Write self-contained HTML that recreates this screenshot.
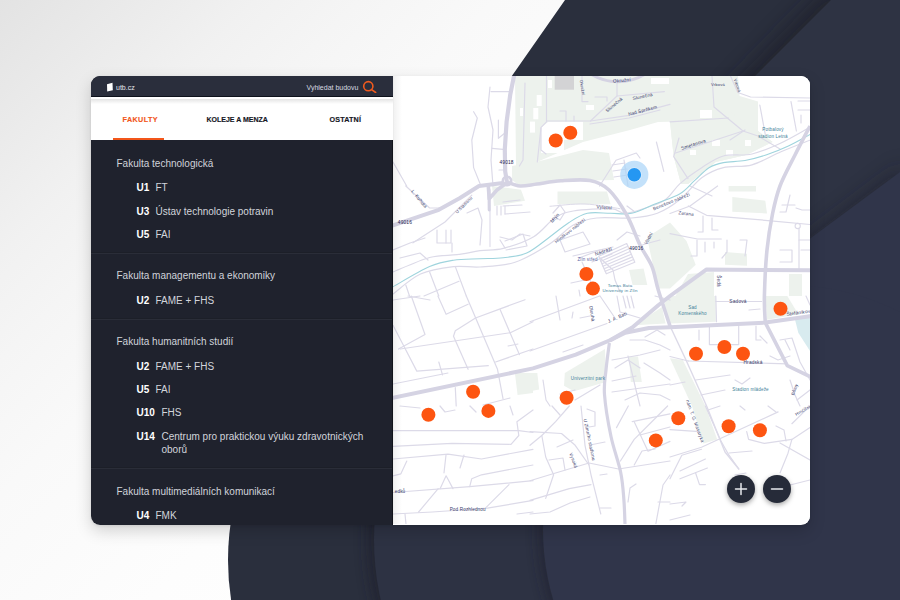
<!DOCTYPE html>
<html><head><meta charset="utf-8">
<style>
html,body{margin:0;padding:0}
body{width:900px;height:600px;overflow:hidden;position:relative;font-family:"Liberation Sans",sans-serif;background:linear-gradient(135deg,#e3e3e3 0%,#f1f1f1 17%,#f5f5f5 24%,#f9f9f9 33%,#fdfdfd 50%,#fff 70%)}
#bg{position:absolute;left:0;top:0}
#card{position:absolute;left:91px;top:76px;width:719px;height:449px;border-radius:9px;box-shadow:0 6px 16px rgba(0,0,0,.17),0 1px 3px rgba(0,0,0,.08);overflow:hidden;background:#fff}
#side{position:absolute;left:0;top:0;width:302px;height:449px;background:#1f222d;z-index:2;box-shadow:inset -1px 0 0 #11131a}
#hdr{position:absolute;left:0;top:0;width:302px;height:21px;background:#2a2e3c;box-shadow:inset 0 -1px 0 #0e121c}
#tabs{position:absolute;left:0;top:21px;width:302px;height:43px;background:#fff}
#tabs:before{content:"";position:absolute;left:0;right:0;top:1.5px;height:5px;background:linear-gradient(#e4e4e4,#fff)}
.t7{position:absolute;font-size:7px;line-height:9px;white-space:nowrap}
.tab{font-weight:700;color:#15171f;letter-spacing:0;-webkit-text-stroke:.15px currentColor}
.l{margin-top:1px;position:absolute;font-size:10px;line-height:12px;white-space:nowrap;color:#d2d5dc}
.h{color:#d0d3da}
.u{margin-top:1px;position:absolute;font-size:10px;line-height:12px;font-weight:700;color:#fff;white-space:nowrap}
.div{position:absolute;left:0;width:301px;height:1px;background:#2a2d38;box-shadow:0 -1px 0 #1c1f28}
#map{position:absolute;left:302px;top:0}
.zb{position:absolute;width:28px;height:28px;border-radius:50%;background:#262b39;box-shadow:0 2px 5px rgba(0,0,0,.35)}
</style></head><body>
<svg id="bg" width="900" height="600" viewBox="0 0 900 600">
<defs>
<filter id="blur6" x="-20%" y="-20%" width="140%" height="140%"><feGaussianBlur stdDeviation="6"/></filter>
<filter id="blur10" x="-50%" y="-50%" width="200%" height="200%"><feGaussianBlur stdDeviation="10"/></filter>
<clipPath id="clipb"><rect x="0" y="480" width="800" height="120"/></clipPath>
<filter id="blur4" x="-20%" y="-20%" width="140%" height="140%"><feGaussianBlur stdDeviation="4"/></filter>
</defs>
<polygon points="565,0 900,0 900,600 700,600 700,320 355,300" fill="#2a2f3d"/>
<polygon points="823,-10 900,-10 900,600 700,600 700,320 523,300" fill="#1a1d26" opacity=".55" filter="url(#blur10)"/>
<polygon points="831,0 900,0 900,600 700,600 700,320 531,300" fill="#2e3343"/>
<polygon points="905,165 905,600 700,600 700,320" fill="#1a1d26" opacity=".5" filter="url(#blur10)"/>
<polygon points="900,172 900,600 700,600 700,320" fill="#30354a"/>
<circle cx="488" cy="560" r="260" fill="#2a2f3d"/>
<circle cx="636" cy="540" r="270" fill="#1c1f29" opacity=".5" filter="url(#blur6)"/>
<circle cx="644" cy="540" r="270" fill="#2d3243"/>
<g clip-path="url(#clipb)"><circle cx="782" cy="530" r="245" fill="#1c1f29" opacity=".45" filter="url(#blur6)"/></g>
<circle cx="788" cy="530" r="245" fill="#30354a"/>
</svg>
<div id="card">
 <div id="side">
  <div id="hdr">
   <svg style="position:absolute;left:15px;top:6px" width="8" height="10" viewBox="0 0 8 10"><path d="M1 2.2 L6.5 0.8 L6.8 8.2 L1.2 9.6 Z" fill="#fff"/></svg>
   <div class="t7" style="left:25px;top:6.5px;color:#e6e8ec">utb.cz</div>
   <div class="t7" style="left:215.5px;top:6.5px;color:#d8dbe1">Vyhledat budovu</div>
   <svg style="position:absolute;left:271px;top:4px" width="16" height="13" viewBox="0 0 16 13"><circle cx="6.3" cy="6.2" r="4.6" stroke="#f05a1e" stroke-width="1.6" fill="none"/><line x1="9.6" y1="9.6" x2="13.6" y2="12.4" stroke="#f05a1e" stroke-width="1.7" stroke-linecap="round"/></svg>
  </div>
  <div id="tabs">
   <div class="t7 tab" style="left:31.5px;top:18px;color:#f2561a;font-size:7.2px;letter-spacing:.4px">FAKULTY</div>
   <div style="position:absolute;left:22px;top:41px;width:51px;height:2px;background:#f2561a"></div>
   <div class="t7 tab" style="left:115.5px;top:18px">KOLEJE A MENZA</div>
   <div class="t7 tab" style="left:238.5px;top:18px;font-size:7.2px;letter-spacing:.15px">OSTATNÍ</div>
  </div>
  <div class="l h" style="left:25.5px;top:81.3px">Fakulta technologická</div>
  <div class="u" style="left:45.5px;top:104.9px">U1</div><div class="l" style="left:64.5px;top:104.9px">FT</div>
  <div class="u" style="left:45.5px;top:128.5px">U3</div><div class="l" style="left:64.5px;top:128.5px">Ústav technologie potravin</div>
  <div class="u" style="left:45.5px;top:151.7px">U5</div><div class="l" style="left:64.5px;top:151.7px">FAI</div>
  <div class="div" style="top:177px"></div>
  <div class="l h" style="left:25.5px;top:193.1px">Fakulta managementu a ekonomiky</div>
  <div class="u" style="left:45.5px;top:217.5px">U2</div><div class="l" style="left:64.5px;top:217.5px">FAME + FHS</div>
  <div class="div" style="top:243px"></div>
  <div class="l h" style="left:25.5px;top:259.2px">Fakulta humanitních studií</div>
  <div class="u" style="left:45.5px;top:283.5px">U2</div><div class="l" style="left:64.5px;top:283.5px">FAME + FHS</div>
  <div class="u" style="left:45.5px;top:307.1px">U5</div><div class="l" style="left:64.5px;top:307.1px">FAI</div>
  <div class="u" style="left:45.5px;top:330.3px">U10</div><div class="l" style="left:70.5px;top:330.3px">FHS</div>
  <div class="u" style="left:45.5px;top:353.5px">U14</div><div class="l" style="left:70.5px;top:353.5px">Centrum pro praktickou výuku zdravotnických</div>
  <div class="l" style="left:70.5px;top:366.8px">oborů</div>
  <div class="div" style="top:392px"></div>
  <div class="l h" style="left:25.5px;top:408.8px">Fakulta multimediálních komunikací</div>
  <div class="u" style="left:45.5px;top:433px">U4</div><div class="l" style="left:64.5px;top:433px">FMK</div>
 </div>
 <svg id="map" width="417" height="448" viewBox="393 76 417 448">
  <rect x="393" y="76" width="417" height="448" fill="#fff"/>
<polygon points="515,76 738,76 739.6,96 758,101.6 758,131 772.6,142 760,148 747,154.8 715.8,162 700,175 688,184 681,184 673.7,156.6 670,121.8 658,122 630,130 583,142 537,162 523,166 516,166" fill="#edf2ed"/><polygon points="670,121.8 730,112 758,131 772.6,142 747,154.8 715.8,162 688,184 681,184 673.7,156.6" fill="#edf2ed"/><polygon points="512,166 540,161 583,150 609,153 614,180 590,180.5 561,181 537,184 520,186 512,180" fill="#edf2ed"/><polygon points="492,186 521,189.7 525,200.7 494,206" fill="#edf2ed"/><polygon points="557.5,191.5 607,191.5 610.6,204.3 557.5,204.3" fill="#edf2ed"/><polygon points="647,237.3 670,222.6 686.5,241 695.7,264.8 670,288.6 658,288.6" fill="#edf2ed"/><polygon points="629,270 643.6,268.5 647.3,285 632.6,285" fill="#edf2ed"/><polygon points="732.3,197 765.3,200.7 767,213.5 732.3,211.7" fill="#edf2ed"/><polygon points="728.6,186 756,186 756,191.5 728.6,191.5" fill="#edf2ed"/><polygon points="725,252 747,253.8 747,265.7 725,264.8" fill="#edf2ed"/><polygon points="789,274 802,274 802,296 789,296" fill="#edf2ed"/><polygon points="688,274 714,272 714,296 675.5,296" fill="#edf2ed"/><polygon points="670,296 715.8,296 715.8,321.7 670,323.5 662,307" fill="#edf2ed"/><polygon points="634.5,325.3 662,307 665.6,323.5" fill="#edf2ed"/><polygon points="765.3,296 787.3,296 798.3,314.3 767,319.8" fill="#edf2ed"/><polygon points="670,358.3 682.8,360 705.4,406 717.2,439.4 703.4,443.4 692,406" fill="#edf2ed"/><polygon points="564.8,373 605,349 606,382 574,391.3 564,385.8" fill="#edf2ed"/><polygon points="629,356.5 638,356.5 641.8,382 630.8,382" fill="#edf2ed"/><polygon points="530,373 537.3,373 539.2,389.5 530,391.3" fill="#edf2ed"/><polygon points="514.9,373 533,373 533,393 517.6,395" fill="#edf2ed"/><rect x="536.7" y="95" width="5" height="11" fill="#fff"/><rect x="533.3" y="108" width="5" height="11.3" fill="#fff"/><rect x="530" y="121.6" width="5" height="11" fill="#fff"/><rect x="548" y="80" width="4" height="8" fill="#fff"/><rect x="586" y="105" width="8" height="5" fill="#fff"/><rect x="651" y="78" width="18" height="6" fill="#fff"/><rect x="655" y="130" width="14" height="10" fill="#fff"/><rect x="700" y="110" width="12" height="8" fill="#fff"/><rect x="712" y="140" width="8" height="6" fill="#fff"/><rect x="726" y="150" width="7" height="6" fill="#fff"/><rect x="745" y="140" width="6" height="6" fill="#fff"/><rect x="690" y="150" width="6" height="5" fill="#fff"/><rect x="520" y="108" width="3" height="8" fill="#fff"/><polygon points="548.3,121.8 583,121.8 583,140 564,140 564,153 541,153 541,128" fill="#fff"/><rect x="554.7" y="76" width="19.3" height="13.7" fill="#d3d3d5"/><polygon points="794.6,318 810,314.3 810,351 798.3,332.7" fill="#d8ebef"/><polyline points="490,87 488,107 493,130 491,160 493,186" fill="none" stroke="#dcdae8" stroke-width="1.2" stroke-linejoin="round" stroke-linecap="round"/><polyline points="491,91.6 510,91.6" fill="none" stroke="#dcdae8" stroke-width="1.2" stroke-linejoin="round" stroke-linecap="round"/><polyline points="473.6,111.7 477.3,118 471.8,140 473.6,167.6 481,186" fill="none" stroke="#dcdae8" stroke-width="1.2" stroke-linejoin="round" stroke-linecap="round"/><polyline points="393,162 406.7,186" fill="none" stroke="#dcdae8" stroke-width="1.2" stroke-linejoin="round" stroke-linecap="round"/><polyline points="498.4,120 498.4,138.3 504,133.7" fill="none" stroke="#dcdae8" stroke-width="1.2" stroke-linejoin="round" stroke-linecap="round"/><polyline points="492,148.4 503,149.3" fill="none" stroke="#dcdae8" stroke-width="1.2" stroke-linejoin="round" stroke-linecap="round"/><polyline points="525,83 523,160 519.4,166" fill="none" stroke="#dcdae8" stroke-width="1.2" stroke-linejoin="round" stroke-linecap="round"/><polyline points="499,170 504,170" fill="none" stroke="#dcdae8" stroke-width="1.2" stroke-linejoin="round" stroke-linecap="round"/><polyline points="546.5,76 546.5,121.8 541,127.3 537.3,162" fill="none" stroke="#dcdae8" stroke-width="1.2" stroke-linejoin="round" stroke-linecap="round"/><polyline points="546.5,121 590.5,121 629,115.4 670,104.4" fill="none" stroke="#dcdae8" stroke-width="1.2" stroke-linejoin="round" stroke-linecap="round"/><polyline points="590,124 629,118 660,110" fill="none" stroke="#dcdae8" stroke-width="1.2" stroke-linejoin="round" stroke-linecap="round"/><polyline points="590.5,121 617,96 617,82" fill="none" stroke="#dcdae8" stroke-width="1.2" stroke-linejoin="round" stroke-linecap="round"/><polyline points="617,96 664.4,91.6" fill="none" stroke="#dcdae8" stroke-width="1.2" stroke-linejoin="round" stroke-linecap="round"/><polyline points="582,76 582,101.6 588,101.6" fill="none" stroke="#dcdae8" stroke-width="1.2" stroke-linejoin="round" stroke-linecap="round"/><polyline points="595,97 607,97 607,101" fill="none" stroke="#dcdae8" stroke-width="1.2" stroke-linejoin="round" stroke-linecap="round"/><polyline points="560,111 566,111 566,121" fill="none" stroke="#dcdae8" stroke-width="1.2" stroke-linejoin="round" stroke-linecap="round"/><polyline points="574,116 574,121" fill="none" stroke="#dcdae8" stroke-width="1.2" stroke-linejoin="round" stroke-linecap="round"/><polyline points="599.6,186 616,160.3 636.3,153 640,158" fill="none" stroke="#dcdae8" stroke-width="1.2" stroke-linejoin="round" stroke-linecap="round"/><polyline points="656.4,142 663.8,171.3" fill="none" stroke="#dcdae8" stroke-width="1.2" stroke-linejoin="round" stroke-linecap="round"/><polyline points="612,165 625,163" fill="none" stroke="#dcdae8" stroke-width="1.2" stroke-linejoin="round" stroke-linecap="round"/><polyline points="613,171 627,169" fill="none" stroke="#dcdae8" stroke-width="1.2" stroke-linejoin="round" stroke-linecap="round"/><polyline points="614,177 628,175" fill="none" stroke="#dcdae8" stroke-width="1.2" stroke-linejoin="round" stroke-linecap="round"/><polyline points="624,160 628,186" fill="none" stroke="#dcdae8" stroke-width="1.2" stroke-linejoin="round" stroke-linecap="round"/><polyline points="541,128 541,150 546,154" fill="none" stroke="#dcdae8" stroke-width="1.2" stroke-linejoin="round" stroke-linecap="round"/><polyline points="712,76 714,107 743,131 758,136 780,149" fill="none" stroke="#dcdae8" stroke-width="1.2" stroke-linejoin="round" stroke-linecap="round"/><polyline points="670,121.8 728.6,118" fill="none" stroke="#dcdae8" stroke-width="1.2" stroke-linejoin="round" stroke-linecap="round"/><polyline points="679,138 673.7,156.6 688,178.6" fill="none" stroke="#dcdae8" stroke-width="1.2" stroke-linejoin="round" stroke-linecap="round"/><polyline points="675.5,153 743,131" fill="none" stroke="#dcdae8" stroke-width="1.2" stroke-linejoin="round" stroke-linecap="round"/><polyline points="730.5,76 737.8,92.5 750.6,97 810,98" fill="none" stroke="#dcdae8" stroke-width="1.2" stroke-linejoin="round" stroke-linecap="round"/><polyline points="759.8,105 765.3,134.6" fill="none" stroke="#dcdae8" stroke-width="1.2" stroke-linejoin="round" stroke-linecap="round"/><polyline points="791,101.6 796.4,131" fill="none" stroke="#dcdae8" stroke-width="1.2" stroke-linejoin="round" stroke-linecap="round"/><polyline points="798,101 810,101" fill="none" stroke="#dcdae8" stroke-width="1.2" stroke-linejoin="round" stroke-linecap="round"/><polyline points="798,110 810,110" fill="none" stroke="#dcdae8" stroke-width="1.2" stroke-linejoin="round" stroke-linecap="round"/><polyline points="801,115 801,123" fill="none" stroke="#dcdae8" stroke-width="1.2" stroke-linejoin="round" stroke-linecap="round"/><polyline points="730,140 745,130" fill="none" stroke="#dcdae8" stroke-width="1.2" stroke-linejoin="round" stroke-linecap="round"/><path d="M393.0,272.0 C399.1,269.6 418.9,260.4 429.6,257.5 C440.3,254.6 448.6,255.8 457.0,254.7 C465.4,253.6 472.3,251.8 480.0,250.7 C487.7,249.6 494.4,250.6 503.3,248.3 C512.2,246.0 525.1,241.8 533.7,236.7 C542.3,231.6 548.1,222.3 554.7,218.0 C561.3,213.7 564.0,212.6 573.3,211.0 C582.6,209.4 602.1,208.3 610.7,208.7 C619.3,209.1 619.3,213.3 624.7,213.3 C630.1,213.3 636.6,210.9 643.3,208.7 C650.0,206.5 658.9,204.2 665.0,200.0 C671.1,195.8 673.9,189.0 680.0,183.6 C686.1,178.2 694.5,172.3 701.7,167.7 C708.9,163.1 715.0,158.3 723.4,156.0 C731.8,153.7 742.4,156.2 752.0,154.0 C761.6,151.8 771.3,147.5 781.0,143.0 C790.7,138.5 805.2,129.8 810.0,127.2" fill="none" stroke="#dcdae8" stroke-width="1.2" stroke-linecap="round"/><path d="M393.0,294.0 C397.6,290.7 410.4,278.6 420.5,274.0 C430.6,269.4 443.6,267.8 453.5,266.6 C463.4,265.4 469.8,267.7 480.0,267.0 C490.2,266.3 503.3,266.2 515.0,262.3 C526.7,258.4 540.3,249.9 550.0,243.7 C559.7,237.5 565.5,229.3 573.3,225.0 C581.1,220.7 587.0,219.2 596.7,218.0 C606.4,216.8 621.6,218.8 631.7,218.0 C641.8,217.2 649.2,216.4 657.3,213.3 C665.3,210.2 672.6,205.4 680.0,199.5 C687.4,193.6 694.5,183.1 701.7,177.8 C708.9,172.5 715.0,169.9 723.4,167.7 C731.8,165.5 742.4,167.5 752.0,164.8 C761.6,162.2 771.3,155.9 781.0,151.8 C790.7,147.7 805.2,142.1 810.0,140.2" fill="none" stroke="#dcdae8" stroke-width="1.2" stroke-linecap="round"/><path d="M550.0,206.3 C555.8,205.9 573.3,203.6 585.0,204.0 C596.7,204.4 614.2,207.9 620.0,208.7" fill="none" stroke="#dcdae8" stroke-width="1.0" stroke-linecap="round"/><polyline points="405.8,186 429.6,208 440.6,208" fill="none" stroke="#dcdae8" stroke-width="1.2" stroke-linejoin="round" stroke-linecap="round"/><polyline points="413,242.8 445,222 471.8,195.2" fill="none" stroke="#dcdae8" stroke-width="1.2" stroke-linejoin="round" stroke-linecap="round"/><polyline points="429.6,272 438.8,296" fill="none" stroke="#dcdae8" stroke-width="1.2" stroke-linejoin="round" stroke-linecap="round"/><polyline points="455.3,266.6 466.3,296" fill="none" stroke="#dcdae8" stroke-width="1.2" stroke-linejoin="round" stroke-linecap="round"/><polyline points="405.8,285 409.5,296" fill="none" stroke="#dcdae8" stroke-width="1.2" stroke-linejoin="round" stroke-linecap="round"/><polyline points="424,296 459,281.3" fill="none" stroke="#dcdae8" stroke-width="1.2" stroke-linejoin="round" stroke-linecap="round"/><polyline points="437,230 437,243 451,243 451,230" fill="none" stroke="#dcdae8" stroke-width="1.2" stroke-linejoin="round" stroke-linecap="round"/><polyline points="446,243 446,230" fill="none" stroke="#dcdae8" stroke-width="1.2" stroke-linejoin="round" stroke-linecap="round"/><polyline points="452,243 452,252" fill="none" stroke="#dcdae8" stroke-width="1.2" stroke-linejoin="round" stroke-linecap="round"/><polyline points="467,213 478,208 482,220 480,245" fill="none" stroke="#dcdae8" stroke-width="1.2" stroke-linejoin="round" stroke-linecap="round"/><polyline points="490,198.8 490,246.5" fill="none" stroke="#e4e2ee" stroke-width="1.4" stroke-linejoin="round" stroke-linecap="round"/><polyline points="500,237 512,240 520,234 530,236" fill="none" stroke="#dcdae8" stroke-width="1.2" stroke-linejoin="round" stroke-linecap="round"/><polyline points="500,240 505,248" fill="none" stroke="#dcdae8" stroke-width="1.2" stroke-linejoin="round" stroke-linecap="round"/><polyline points="503,202 520,200" fill="none" stroke="#dcdae8" stroke-width="1.2" stroke-linejoin="round" stroke-linecap="round"/><polyline points="503,206 522,205" fill="none" stroke="#dcdae8" stroke-width="1.2" stroke-linejoin="round" stroke-linecap="round"/><polyline points="497,206 497,215" fill="none" stroke="#dcdae8" stroke-width="1.2" stroke-linejoin="round" stroke-linecap="round"/><polyline points="501,206 501,215" fill="none" stroke="#dcdae8" stroke-width="1.2" stroke-linejoin="round" stroke-linecap="round"/><polyline points="505,206 505,214" fill="none" stroke="#dcdae8" stroke-width="1.2" stroke-linejoin="round" stroke-linecap="round"/><polyline points="505,214 530,212" fill="none" stroke="#dcdae8" stroke-width="1.2" stroke-linejoin="round" stroke-linecap="round"/><polyline points="505,241 523,234 527,246 506,250" fill="none" stroke="#dcdae8" stroke-width="1.2" stroke-linejoin="round" stroke-linecap="round"/><polyline points="393,250 410,243 425,238" fill="none" stroke="#dcdae8" stroke-width="1.2" stroke-linejoin="round" stroke-linecap="round"/><polyline points="400,258 420,253 428,260" fill="none" stroke="#dcdae8" stroke-width="1.2" stroke-linejoin="round" stroke-linecap="round"/><polyline points="553,213 560,205 565,212 560,220 555,217" fill="none" stroke="#dcdae8" stroke-width="1.2" stroke-linejoin="round" stroke-linecap="round"/><polyline points="560,240 583,232 590,244 565,252 560,240" fill="none" stroke="#dcdae8" stroke-width="1.2" stroke-linejoin="round" stroke-linecap="round"/><polyline points="579,258 600,250 612,250" fill="none" stroke="#dcdae8" stroke-width="1.2" stroke-linejoin="round" stroke-linecap="round"/><polyline points="592,262 612,254" fill="none" stroke="#dcdae8" stroke-width="1.2" stroke-linejoin="round" stroke-linecap="round"/><polyline points="600,258 613,270 615,280 620,292" fill="none" stroke="#dcdae8" stroke-width="1.2" stroke-linejoin="round" stroke-linecap="round"/><polyline points="617,240 627,232 640,236" fill="none" stroke="#dcdae8" stroke-width="1.2" stroke-linejoin="round" stroke-linecap="round"/><polyline points="630,250 645,244 660,240" fill="none" stroke="#dcdae8" stroke-width="1.2" stroke-linejoin="round" stroke-linecap="round"/><polyline points="573,256 590,252 613,247" fill="none" stroke="#dcdae8" stroke-width="1.2" stroke-linejoin="round" stroke-linecap="round"/><polyline points="582,262 590,280 596,292" fill="none" stroke="#dcdae8" stroke-width="1.2" stroke-linejoin="round" stroke-linecap="round"/><polyline points="571,283 585,280" fill="none" stroke="#dcdae8" stroke-width="1.2" stroke-linejoin="round" stroke-linecap="round"/><polyline points="579,290 580,296" fill="none" stroke="#dcdae8" stroke-width="1.2" stroke-linejoin="round" stroke-linecap="round"/><polyline points="598.7,256.3 626.7,243.5 634.8,262.2 606.3,273.8 598.7,256.3" fill="none" stroke="#dcdae8" stroke-width="1.2" stroke-linejoin="round" stroke-linecap="round"/><polyline points="599.8,258.8 627.9,246.2" fill="none" stroke="#dcdae8" stroke-width="1.2" stroke-linejoin="round" stroke-linecap="round"/><polyline points="600.9,261.3 629.0,248.8" fill="none" stroke="#dcdae8" stroke-width="1.2" stroke-linejoin="round" stroke-linecap="round"/><polyline points="602.0,263.8 630.2,251.5" fill="none" stroke="#dcdae8" stroke-width="1.2" stroke-linejoin="round" stroke-linecap="round"/><polyline points="603.0,266.3 631.3,254.2" fill="none" stroke="#dcdae8" stroke-width="1.2" stroke-linejoin="round" stroke-linecap="round"/><polyline points="604.1,268.8 632.5,256.9" fill="none" stroke="#dcdae8" stroke-width="1.2" stroke-linejoin="round" stroke-linecap="round"/><polyline points="605.2,271.3 633.6,259.5" fill="none" stroke="#dcdae8" stroke-width="1.2" stroke-linejoin="round" stroke-linecap="round"/><polyline points="627,206 635,212" fill="none" stroke="#dcdae8" stroke-width="1.2" stroke-linejoin="round" stroke-linecap="round"/><polyline points="670,213.5 690,206 717.6,186" fill="none" stroke="#dcdae8" stroke-width="1.2" stroke-linejoin="round" stroke-linecap="round"/><polyline points="688.3,206 706.6,215.3 770.8,220.8 810,224.5" fill="none" stroke="#dcdae8" stroke-width="1.2" stroke-linejoin="round" stroke-linecap="round"/><polyline points="670,233.6 697.5,239 721.3,239" fill="none" stroke="#dcdae8" stroke-width="1.2" stroke-linejoin="round" stroke-linecap="round"/><polyline points="703,216 703,232 698,232" fill="none" stroke="#dcdae8" stroke-width="1.2" stroke-linejoin="round" stroke-linecap="round"/><polyline points="712,218 712,230 718,230" fill="none" stroke="#dcdae8" stroke-width="1.2" stroke-linejoin="round" stroke-linecap="round"/><polyline points="740,240 747,240 745,256" fill="none" stroke="#dcdae8" stroke-width="1.2" stroke-linejoin="round" stroke-linecap="round"/><polyline points="727,240 727,252 722,258" fill="none" stroke="#dcdae8" stroke-width="1.2" stroke-linejoin="round" stroke-linecap="round"/><polyline points="697,240 697,256 691,256" fill="none" stroke="#dcdae8" stroke-width="1.2" stroke-linejoin="round" stroke-linecap="round"/><polyline points="705,242 705,252" fill="none" stroke="#dcdae8" stroke-width="1.2" stroke-linejoin="round" stroke-linecap="round"/><polyline points="714,242 714,248" fill="none" stroke="#dcdae8" stroke-width="1.2" stroke-linejoin="round" stroke-linecap="round"/><polyline points="790,195 786,212 780,212" fill="none" stroke="#dcdae8" stroke-width="1.2" stroke-linejoin="round" stroke-linecap="round"/><polyline points="782,205 795,205" fill="none" stroke="#dcdae8" stroke-width="1.2" stroke-linejoin="round" stroke-linecap="round"/><polyline points="796,208 802,210 810,210" fill="none" stroke="#dcdae8" stroke-width="1.2" stroke-linejoin="round" stroke-linecap="round"/><polyline points="799,225 799,270" fill="none" stroke="#dcdae8" stroke-width="1.2" stroke-linejoin="round" stroke-linecap="round"/><polyline points="780,250 792,250 792,262 780,262" fill="none" stroke="#dcdae8" stroke-width="1.2" stroke-linejoin="round" stroke-linecap="round"/><polyline points="799,240 810,240" fill="none" stroke="#dcdae8" stroke-width="1.2" stroke-linejoin="round" stroke-linecap="round"/><polyline points="801,250 810,250" fill="none" stroke="#dcdae8" stroke-width="1.2" stroke-linejoin="round" stroke-linecap="round"/><polyline points="690,186 712,196" fill="none" stroke="#dcdae8" stroke-width="1.2" stroke-linejoin="round" stroke-linecap="round"/><polyline points="411.3,296 425,334.5 398.5,349" fill="none" stroke="#dcdae8" stroke-width="1.2" stroke-linejoin="round" stroke-linecap="round"/><polyline points="393,325.3 416.8,371.1 488.3,365.6" fill="none" stroke="#dcdae8" stroke-width="1.2" stroke-linejoin="round" stroke-linecap="round"/><polyline points="437.9,296 446.1,314.3 468.1,304.2" fill="none" stroke="#dcdae8" stroke-width="1.2" stroke-linejoin="round" stroke-linecap="round"/><polyline points="466.3,296 497.5,369.3 503,398.6" fill="none" stroke="#dcdae8" stroke-width="1.2" stroke-linejoin="round" stroke-linecap="round"/><polyline points="475.5,318 525,299.7" fill="none" stroke="#dcdae8" stroke-width="1.2" stroke-linejoin="round" stroke-linecap="round"/><polyline points="475.5,318 455.3,330.8 453.5,336.3 468.1,369.3" fill="none" stroke="#dcdae8" stroke-width="1.2" stroke-linejoin="round" stroke-linecap="round"/><polyline points="400.3,349 510.3,332.7 533,321.7" fill="none" stroke="#dcdae8" stroke-width="1.2" stroke-linejoin="round" stroke-linecap="round"/><polyline points="500.2,309.7 519.4,354.6" fill="none" stroke="#dcdae8" stroke-width="1.2" stroke-linejoin="round" stroke-linecap="round"/><polyline points="438.8,362 442.5,374.8" fill="none" stroke="#dcdae8" stroke-width="1.2" stroke-linejoin="round" stroke-linecap="round"/><polyline points="495.6,362 533,349" fill="none" stroke="#dcdae8" stroke-width="1.2" stroke-linejoin="round" stroke-linecap="round"/><polyline points="455.3,387.6 456.2,406" fill="none" stroke="#dcdae8" stroke-width="1.2" stroke-linejoin="round" stroke-linecap="round"/><polyline points="483,405 510,398" fill="none" stroke="#dcdae8" stroke-width="1.2" stroke-linejoin="round" stroke-linecap="round"/><polyline points="393,384 448,373" fill="none" stroke="#dcdae8" stroke-width="1.2" stroke-linejoin="round" stroke-linecap="round"/><polyline points="393,300 420,296" fill="none" stroke="#dcdae8" stroke-width="1.2" stroke-linejoin="round" stroke-linecap="round"/><polyline points="408,296 430,300" fill="none" stroke="#dcdae8" stroke-width="1.2" stroke-linejoin="round" stroke-linecap="round"/><polyline points="508,346 518,344" fill="none" stroke="#dcdae8" stroke-width="1.2" stroke-linejoin="round" stroke-linecap="round"/><polyline points="530,321.7 599.6,296" fill="none" stroke="#dcdae8" stroke-width="1.2" stroke-linejoin="round" stroke-linecap="round"/><polyline points="530,351 607,323.5" fill="none" stroke="#dcdae8" stroke-width="1.2" stroke-linejoin="round" stroke-linecap="round"/><polyline points="556,296 560,320" fill="none" stroke="#dcdae8" stroke-width="1.2" stroke-linejoin="round" stroke-linecap="round"/><polyline points="572,318 573,312" fill="none" stroke="#dcdae8" stroke-width="1.2" stroke-linejoin="round" stroke-linecap="round"/><polyline points="580,318 590,316" fill="none" stroke="#dcdae8" stroke-width="1.2" stroke-linejoin="round" stroke-linecap="round"/><polyline points="600,296 615,318" fill="none" stroke="#dcdae8" stroke-width="1.2" stroke-linejoin="round" stroke-linecap="round"/><polyline points="617,296 620,312 640,318" fill="none" stroke="#dcdae8" stroke-width="1.2" stroke-linejoin="round" stroke-linecap="round"/><polyline points="623,296 626,308" fill="none" stroke="#dcdae8" stroke-width="1.2" stroke-linejoin="round" stroke-linecap="round"/><polyline points="627,296 630,308" fill="none" stroke="#dcdae8" stroke-width="1.2" stroke-linejoin="round" stroke-linecap="round"/><polyline points="631,296 634,308" fill="none" stroke="#dcdae8" stroke-width="1.2" stroke-linejoin="round" stroke-linecap="round"/><polyline points="563,352 583,345" fill="none" stroke="#dcdae8" stroke-width="1.2" stroke-linejoin="round" stroke-linecap="round"/><polyline points="645,337 657,330 665,335" fill="none" stroke="#dcdae8" stroke-width="1.2" stroke-linejoin="round" stroke-linecap="round"/><polyline points="630,340 645,340 660,345 670,350" fill="none" stroke="#dcdae8" stroke-width="1.2" stroke-linejoin="round" stroke-linecap="round"/><polyline points="612,360 640,355 660,350" fill="none" stroke="#dcdae8" stroke-width="1.2" stroke-linejoin="round" stroke-linecap="round"/><polyline points="615,368 628,360 640,368" fill="none" stroke="#dcdae8" stroke-width="1.2" stroke-linejoin="round" stroke-linecap="round"/><polyline points="612,381 636,376" fill="none" stroke="#dcdae8" stroke-width="1.2" stroke-linejoin="round" stroke-linecap="round"/><polyline points="628,356 636,390 640,406" fill="none" stroke="#dcdae8" stroke-width="1.2" stroke-linejoin="round" stroke-linecap="round"/><polyline points="612,392 670,384" fill="none" stroke="#dcdae8" stroke-width="1.2" stroke-linejoin="round" stroke-linecap="round"/><polyline points="625,400 640,393 660,395 670,400" fill="none" stroke="#dcdae8" stroke-width="1.2" stroke-linejoin="round" stroke-linecap="round"/><polyline points="543,380 546,400 550,406" fill="none" stroke="#dcdae8" stroke-width="1.2" stroke-linejoin="round" stroke-linecap="round"/><polyline points="560,394 575,390" fill="none" stroke="#dcdae8" stroke-width="1.2" stroke-linejoin="round" stroke-linecap="round"/><polyline points="575,400 600,385" fill="none" stroke="#dcdae8" stroke-width="1.2" stroke-linejoin="round" stroke-linecap="round"/><polyline points="655,296 670,300" fill="none" stroke="#dcdae8" stroke-width="1.2" stroke-linejoin="round" stroke-linecap="round"/><polyline points="644,363 660,373 670,380" fill="none" stroke="#dcdae8" stroke-width="1.2" stroke-linejoin="round" stroke-linecap="round"/><polyline points="715.8,301.5 761.6,301.5" fill="none" stroke="#dcdae8" stroke-width="1.2" stroke-linejoin="round" stroke-linecap="round"/><polyline points="715.8,296 716.5,321.7" fill="none" stroke="#dcdae8" stroke-width="1.2" stroke-linejoin="round" stroke-linecap="round"/><polyline points="688.3,361 787.3,363.8" fill="none" stroke="#dcdae8" stroke-width="1.2" stroke-linejoin="round" stroke-linecap="round"/><polyline points="670,356.5 688.3,361" fill="none" stroke="#dcdae8" stroke-width="1.2" stroke-linejoin="round" stroke-linecap="round"/><polyline points="709.4,326.2 709.4,344.6 738.7,344.6 738.7,326.2" fill="none" stroke="#dcdae8" stroke-width="1.2" stroke-linejoin="round" stroke-linecap="round"/><polyline points="699,330 699,340" fill="none" stroke="#dcdae8" stroke-width="1.2" stroke-linejoin="round" stroke-linecap="round"/><polyline points="756,326 756,340 761,340" fill="none" stroke="#dcdae8" stroke-width="1.2" stroke-linejoin="round" stroke-linecap="round"/><polyline points="760,336 767,343" fill="none" stroke="#dcdae8" stroke-width="1.2" stroke-linejoin="round" stroke-linecap="round"/><polyline points="770,356 778,360 790,356" fill="none" stroke="#dcdae8" stroke-width="1.2" stroke-linejoin="round" stroke-linecap="round"/><polyline points="695.7,380 730,375" fill="none" stroke="#dcdae8" stroke-width="1.2" stroke-linejoin="round" stroke-linecap="round"/><polyline points="701,395 725,390" fill="none" stroke="#dcdae8" stroke-width="1.2" stroke-linejoin="round" stroke-linecap="round"/><polyline points="670,385 685,382" fill="none" stroke="#dcdae8" stroke-width="1.2" stroke-linejoin="round" stroke-linecap="round"/><polyline points="735,380 742,384 750,378" fill="none" stroke="#dcdae8" stroke-width="1.2" stroke-linejoin="round" stroke-linecap="round"/><polyline points="790,380 795,395 800,406" fill="none" stroke="#dcdae8" stroke-width="1.2" stroke-linejoin="round" stroke-linecap="round"/><polyline points="810,390 797,400" fill="none" stroke="#dcdae8" stroke-width="1.2" stroke-linejoin="round" stroke-linecap="round"/><polyline points="806,296 810,305" fill="none" stroke="#dcdae8" stroke-width="1.2" stroke-linejoin="round" stroke-linecap="round"/><polyline points="749,310 760,309" fill="none" stroke="#dcdae8" stroke-width="1.2" stroke-linejoin="round" stroke-linecap="round"/><polyline points="785,340 790,350" fill="none" stroke="#dcdae8" stroke-width="1.2" stroke-linejoin="round" stroke-linecap="round"/><polyline points="780,340 792,338 800,362 810,380" fill="none" stroke="#dcdae8" stroke-width="1.2" stroke-linejoin="round" stroke-linecap="round"/><polyline points="393,430.6 518.8,430.6 533,432.5" fill="none" stroke="#dcdae8" stroke-width="1.2" stroke-linejoin="round" stroke-linecap="round"/><polyline points="393,446.3 452,443.4 511,444.3 518.8,435.5 516.9,421.7 533,410" fill="none" stroke="#dcdae8" stroke-width="1.2" stroke-linejoin="round" stroke-linecap="round"/><polyline points="393,459 448,454.2 481.5,459 533,449.3" fill="none" stroke="#dcdae8" stroke-width="1.2" stroke-linejoin="round" stroke-linecap="round"/><polyline points="393,475.8 400.9,473.8 406.8,461" fill="none" stroke="#dcdae8" stroke-width="1.2" stroke-linejoin="round" stroke-linecap="round"/><polyline points="446,455 444,472.8" fill="none" stroke="#dcdae8" stroke-width="1.2" stroke-linejoin="round" stroke-linecap="round"/><polyline points="464,455 460,468" fill="none" stroke="#dcdae8" stroke-width="1.2" stroke-linejoin="round" stroke-linecap="round"/><polyline points="440.2,488.6 446.1,475.8 453,488.6" fill="none" stroke="#dcdae8" stroke-width="1.2" stroke-linejoin="round" stroke-linecap="round"/><polyline points="393,492.5 469.7,486.6 533,480.7" fill="none" stroke="#dcdae8" stroke-width="1.2" stroke-linejoin="round" stroke-linecap="round"/><polyline points="469.7,486.6 471.7,478.8 481.5,474.8 533,465" fill="none" stroke="#dcdae8" stroke-width="1.2" stroke-linejoin="round" stroke-linecap="round"/><polyline points="418.6,512 438.2,488.6" fill="none" stroke="#dcdae8" stroke-width="1.2" stroke-linejoin="round" stroke-linecap="round"/><polyline points="393,514 432.3,512 487.4,508.2 533,500.4" fill="none" stroke="#dcdae8" stroke-width="1.2" stroke-linejoin="round" stroke-linecap="round"/><polyline points="485.4,508.2 509,484.6" fill="none" stroke="#dcdae8" stroke-width="1.2" stroke-linejoin="round" stroke-linecap="round"/><polyline points="405,514 406,524" fill="none" stroke="#dcdae8" stroke-width="1.2" stroke-linejoin="round" stroke-linecap="round"/><polyline points="517,514 533,512" fill="none" stroke="#dcdae8" stroke-width="1.2" stroke-linejoin="round" stroke-linecap="round"/><polyline points="400,406 420,408" fill="none" stroke="#dcdae8" stroke-width="1.2" stroke-linejoin="round" stroke-linecap="round"/><polyline points="440,406 445,412 455,410" fill="none" stroke="#dcdae8" stroke-width="1.2" stroke-linejoin="round" stroke-linecap="round"/><polyline points="510,406 513,415" fill="none" stroke="#dcdae8" stroke-width="1.2" stroke-linejoin="round" stroke-linecap="round"/><polyline points="470,406 476,412" fill="none" stroke="#dcdae8" stroke-width="1.2" stroke-linejoin="round" stroke-linecap="round"/><polyline points="530,431.6 561.5,433.5 575.2,445.3 589,465 591,474.8 600.8,514" fill="none" stroke="#dcdae8" stroke-width="1.2" stroke-linejoin="round" stroke-linecap="round"/><polyline points="581,406 585,445.3 589,465" fill="none" stroke="#dcdae8" stroke-width="1.2" stroke-linejoin="round" stroke-linecap="round"/><polyline points="530,480.7 549.7,474.8 589,463 618.5,469 670,461" fill="none" stroke="#dcdae8" stroke-width="1.2" stroke-linejoin="round" stroke-linecap="round"/><polyline points="541.8,435.5 545.7,457 553.6,474.8 545.7,498.4" fill="none" stroke="#dcdae8" stroke-width="1.2" stroke-linejoin="round" stroke-linecap="round"/><polyline points="530,445.3 541.8,435.5 555.6,421.7 569.3,406" fill="none" stroke="#dcdae8" stroke-width="1.2" stroke-linejoin="round" stroke-linecap="round"/><polyline points="530,500.4 569.3,488.6 591,484.6" fill="none" stroke="#dcdae8" stroke-width="1.2" stroke-linejoin="round" stroke-linecap="round"/><polyline points="530,514 550,512 570,503 590,497" fill="none" stroke="#dcdae8" stroke-width="1.2" stroke-linejoin="round" stroke-linecap="round"/><polyline points="616.5,427.6 628.3,406" fill="none" stroke="#dcdae8" stroke-width="1.2" stroke-linejoin="round" stroke-linecap="round"/><polyline points="620.4,461 634.2,439.4 667.6,406" fill="none" stroke="#dcdae8" stroke-width="1.2" stroke-linejoin="round" stroke-linecap="round"/><polyline points="634.2,421.7 648,451.2 670,441.4" fill="none" stroke="#dcdae8" stroke-width="1.2" stroke-linejoin="round" stroke-linecap="round"/><polyline points="632.2,421.7 670,413.9" fill="none" stroke="#dcdae8" stroke-width="1.2" stroke-linejoin="round" stroke-linecap="round"/><polyline points="640,435 670,427" fill="none" stroke="#dcdae8" stroke-width="1.2" stroke-linejoin="round" stroke-linecap="round"/><polyline points="634.2,465 642,451 655,449" fill="none" stroke="#dcdae8" stroke-width="1.2" stroke-linejoin="round" stroke-linecap="round"/><polyline points="587,409 595,412 595,426 589,427" fill="none" stroke="#dcdae8" stroke-width="1.2" stroke-linejoin="round" stroke-linecap="round"/><polyline points="628,502 630,488 636,484" fill="none" stroke="#dcdae8" stroke-width="1.2" stroke-linejoin="round" stroke-linecap="round"/><polyline points="655.8,524 663,485 670,475" fill="none" stroke="#dcdae8" stroke-width="1.2" stroke-linejoin="round" stroke-linecap="round"/><polyline points="658,502 670,502" fill="none" stroke="#dcdae8" stroke-width="1.2" stroke-linejoin="round" stroke-linecap="round"/><polyline points="557,447 573,440" fill="none" stroke="#dcdae8" stroke-width="1.2" stroke-linejoin="round" stroke-linecap="round"/><polyline points="549,460 563,458 565,470" fill="none" stroke="#dcdae8" stroke-width="1.2" stroke-linejoin="round" stroke-linecap="round"/><polyline points="600,475 607,474" fill="none" stroke="#dcdae8" stroke-width="1.2" stroke-linejoin="round" stroke-linecap="round"/><polyline points="590,445 605,442" fill="none" stroke="#dcdae8" stroke-width="1.2" stroke-linejoin="round" stroke-linecap="round"/><polyline points="600,508 611,508" fill="none" stroke="#dcdae8" stroke-width="1.2" stroke-linejoin="round" stroke-linecap="round"/><polyline points="552,406 560,415" fill="none" stroke="#dcdae8" stroke-width="1.2" stroke-linejoin="round" stroke-linecap="round"/><polyline points="670,457 701.5,447.3 778.1,411.9" fill="none" stroke="#dcdae8" stroke-width="1.2" stroke-linejoin="round" stroke-linecap="round"/><polyline points="705.4,406 721.1,441.4 729,455.2 738.8,469" fill="none" stroke="#dcdae8" stroke-width="1.2" stroke-linejoin="round" stroke-linecap="round"/><polyline points="670,429.6 699.5,431.6" fill="none" stroke="#dcdae8" stroke-width="1.2" stroke-linejoin="round" stroke-linecap="round"/><polyline points="746.7,431.6 748.6,439.4 764.4,443.4 791.9,439.4 810,427.6" fill="none" stroke="#dcdae8" stroke-width="1.2" stroke-linejoin="round" stroke-linecap="round"/><polyline points="791.9,439.4 788,453.2 780.1,472.8" fill="none" stroke="#dcdae8" stroke-width="1.2" stroke-linejoin="round" stroke-linecap="round"/><polyline points="776,426 784,430 786,441" fill="none" stroke="#dcdae8" stroke-width="1.2" stroke-linejoin="round" stroke-linecap="round"/><polyline points="670,478.8 681.8,455.2 701.5,449.3" fill="none" stroke="#dcdae8" stroke-width="1.2" stroke-linejoin="round" stroke-linecap="round"/><polyline points="680,471 705.4,459" fill="none" stroke="#dcdae8" stroke-width="1.2" stroke-linejoin="round" stroke-linecap="round"/><polyline points="680,478.8 707.4,468" fill="none" stroke="#dcdae8" stroke-width="1.2" stroke-linejoin="round" stroke-linecap="round"/><polyline points="729,453 752,451" fill="none" stroke="#dcdae8" stroke-width="1.2" stroke-linejoin="round" stroke-linecap="round"/><polyline points="695.6,473 699.5,484.6 705.4,484.6" fill="none" stroke="#dcdae8" stroke-width="1.2" stroke-linejoin="round" stroke-linecap="round"/><polyline points="670,504 686,502 682,506" fill="none" stroke="#dcdae8" stroke-width="1.2" stroke-linejoin="round" stroke-linecap="round"/><polyline points="791.9,423.7 810,406" fill="none" stroke="#dcdae8" stroke-width="1.2" stroke-linejoin="round" stroke-linecap="round"/><polyline points="780,443 810,460" fill="none" stroke="#dcdae8" stroke-width="1.2" stroke-linejoin="round" stroke-linecap="round"/><polyline points="708,410 720,406" fill="none" stroke="#dcdae8" stroke-width="1.2" stroke-linejoin="round" stroke-linecap="round"/><polyline points="740,406 745,410" fill="none" stroke="#dcdae8" stroke-width="1.2" stroke-linejoin="round" stroke-linecap="round"/><polyline points="768,406 776,412" fill="none" stroke="#dcdae8" stroke-width="1.2" stroke-linejoin="round" stroke-linecap="round"/><polyline points="735,475 746,473" fill="none" stroke="#dcdae8" stroke-width="1.2" stroke-linejoin="round" stroke-linecap="round"/><polyline points="670,520 690,515" fill="none" stroke="#dcdae8" stroke-width="1.2" stroke-linejoin="round" stroke-linecap="round"/><polyline points="790,485 810,480" fill="none" stroke="#dcdae8" stroke-width="1.2" stroke-linejoin="round" stroke-linecap="round"/><polyline points="670,326 686,360 706.6,406 725,452 738.8,469" fill="none" stroke="#dcdae8" stroke-width="1.4" stroke-linejoin="round" stroke-linecap="round"/><path d="M393.0,286.8 C399.1,283.4 419.5,271.0 429.6,266.6 C439.7,262.2 445.1,261.5 453.5,260.2 C461.9,258.9 471.7,259.2 480.0,258.8 C488.3,258.4 495.5,258.7 503.3,257.7 C511.1,256.7 518.9,256.5 526.7,253.0 C534.5,249.5 543.0,241.8 550.0,236.7 C557.0,231.6 562.5,226.6 568.7,222.7 C574.9,218.8 580.3,214.9 587.3,213.3 C594.3,211.7 603.3,213.3 610.7,213.3 C618.1,213.3 624.3,214.9 631.7,213.3 C639.1,211.8 647.0,207.3 655.0,204.0 C663.0,200.7 673.4,197.6 680.0,193.7 C686.6,189.8 689.7,185.0 694.5,180.7 C699.3,176.4 704.2,170.7 709.0,167.7 C713.8,164.7 717.4,163.8 723.4,162.6 C729.4,161.4 737.8,161.8 745.0,160.5 C752.2,159.2 759.5,157.1 766.7,154.7 C773.9,152.3 781.2,149.4 788.4,146.0 C795.6,142.6 806.4,136.4 810.0,134.5" fill="none" stroke="#9fd4dd" stroke-width="1.1"/><polyline points="514,76 510.3,94.3 506.6,121.8 504.8,149.3 505.2,171.3 506.6,180" fill="none" stroke="#d5d3e3" stroke-width="4.2" stroke-linejoin="round" stroke-linecap="round"/><path d="M507.0,182.0 C509.2,182.7 515.0,185.7 520.0,186.0 C525.0,186.3 530.2,184.9 537.0,184.0 C543.8,183.1 552.2,181.4 561.0,180.8 C569.8,180.2 582.0,179.0 590.0,180.5 C598.0,182.0 602.9,184.2 609.0,190.0 C615.1,195.8 621.5,205.8 626.7,215.0 C631.9,224.2 635.8,236.4 640.0,245.0 C644.2,253.6 649.0,259.1 652.0,266.6 C655.0,274.1 655.3,280.1 658.3,290.0 C661.3,299.9 668.0,320.0 670.0,326.0" fill="none" stroke="#d5d3e3" stroke-width="3.6" stroke-linecap="round"/><polyline points="503,183 479,186 460,198 438.8,209.8 393,225.4" fill="none" stroke="#d5d3e3" stroke-width="4.0" stroke-linejoin="round" stroke-linecap="round"/><polyline points="506.6,183 497,190 489.2,198.8 488.3,186" fill="none" stroke="#d5d3e3" stroke-width="3.6" stroke-linejoin="round" stroke-linecap="round"/><polyline points="489,190 489.2,210" fill="none" stroke="#d5d3e3" stroke-width="3.0" stroke-linejoin="round" stroke-linecap="round"/><polyline points="393,397.7 533,368.4 575.8,354.6 610.6,340 632.6,327.2 658.3,305.2 670,296 706.6,269.4 730,269.8 810,270.3" fill="none" stroke="#d5d3e3" stroke-width="4.0" stroke-linejoin="round" stroke-linecap="round"/><polyline points="610.6,340 625.3,332.7 649,328 670,327.2 765.3,322.6 810,316.2" fill="none" stroke="#d5d3e3" stroke-width="4.0" stroke-linejoin="round" stroke-linecap="round"/><path d="M810.0,126.0 C807.5,130.8 800.0,145.0 795.0,155.0 C790.0,165.0 783.7,176.2 780.0,186.0 C776.3,195.8 774.8,202.8 772.6,213.5 C770.4,224.2 768.4,236.2 767.0,250.0 C765.6,263.8 764.7,283.9 764.4,296.0 C764.1,308.1 765.1,318.2 765.3,322.6" fill="none" stroke="#d5d3e3" stroke-width="3.6"/><polyline points="765.3,322.6 787.3,365.6 810,376.6" fill="none" stroke="#d5d3e3" stroke-width="3.6" stroke-linejoin="round" stroke-linecap="round"/><path d="M609.4,343.0 C608.8,347.5 606.8,361.4 606.0,370.0 C605.2,378.6 603.7,383.4 604.5,394.5 C605.3,405.6 608.3,423.6 611.0,436.5 C613.7,449.4 618.5,461.4 620.6,472.0 C622.8,482.6 623.2,491.3 623.9,500.0 C624.6,508.7 624.8,520.0 625.0,524.0" fill="none" stroke="#d5d3e3" stroke-width="3.2"/><circle cx="618" cy="30.7" r="51" fill="none" stroke="#d5d3e3" stroke-width="3"/><circle cx="797.7" cy="226" r="2.6" fill="#fff" stroke="#dcdae8" stroke-width="1.1"/><circle cx="507" cy="181" r="4.2" fill="none" stroke="#d5d3e3" stroke-width="2.6"/><text x="506.6" y="163.6" font-size="4.83" font-weight="400" fill="#1e2450" text-anchor="middle" letter-spacing=".15" transform="rotate(0 506.6 163.6)">49018</text><text x="404.9" y="224" font-size="4.83" font-weight="400" fill="#1e2450" text-anchor="middle" letter-spacing=".15" transform="rotate(0 404.9 224)">49016</text><text x="636.3" y="249.6" font-size="4.83" font-weight="400" fill="#1e2450" text-anchor="middle" letter-spacing=".15" transform="rotate(0 636.3 249.6)">49016</text><text x="418" y="200" font-size="4.83" font-weight="400" fill="#3a406c" text-anchor="middle" letter-spacing=".15" transform="rotate(50 418 200)">L. Kuhuta</text><text x="465" y="206" font-size="4.14" font-weight="400" fill="#3a406c" text-anchor="middle" letter-spacing=".15" transform="rotate(-45 465 206)">U Stadionu</text><text x="622" y="82" font-size="4.83" font-weight="400" fill="#3a406c" text-anchor="middle" letter-spacing=".15" transform="rotate(-5 622 82)">Okružní</text><text x="581" y="88" font-size="4.14" font-weight="400" fill="#3a406c" text-anchor="middle" letter-spacing=".15" transform="rotate(80 581 88)">Okružní</text><text x="615" y="106" font-size="4.60" font-weight="400" fill="#3a406c" text-anchor="middle" letter-spacing=".15" transform="rotate(-40 615 106)">Slunečná</text><text x="643" y="98" font-size="4.60" font-weight="400" fill="#3a406c" text-anchor="middle" letter-spacing=".15" transform="rotate(-12 643 98)">Slunečná</text><text x="643" y="112" font-size="4.60" font-weight="400" fill="#3a406c" text-anchor="middle" letter-spacing=".15" transform="rotate(-15 643 112)">Nad Šprňkem</text><text x="718" y="86" font-size="4.14" font-weight="400" fill="#3a406c" text-anchor="middle" letter-spacing=".15" transform="rotate(0 718 86)">Vrbová</text><text x="736" y="86" font-size="4.14" font-weight="400" fill="#3a406c" text-anchor="middle" letter-spacing=".15" transform="rotate(70 736 86)">Vrbová</text><text x="694" y="146" font-size="4.83" font-weight="400" fill="#3a406c" text-anchor="middle" letter-spacing=".15" transform="rotate(-18 694 146)">Smetanova</text><text x="773" y="131" font-size="4.60" font-weight="400" fill="#3e8198" text-anchor="middle" letter-spacing=".15" transform="rotate(0 773 131)">Potbalový</text><text x="773" y="138" font-size="4.60" font-weight="400" fill="#3e8198" text-anchor="middle" letter-spacing=".15" transform="rotate(0 773 138)">stadion Letná</text><text x="604" y="209" font-size="4.83" font-weight="400" fill="#3a406c" text-anchor="middle" letter-spacing=".15" transform="rotate(5 604 209)">Vyletní</text><text x="556" y="219" font-size="4.83" font-weight="400" fill="#3a406c" text-anchor="middle" letter-spacing=".15" transform="rotate(-50 556 219)">Mlýn</text><text x="571" y="232" font-size="4.37" font-weight="400" fill="#3a406c" text-anchor="middle" letter-spacing=".15" transform="rotate(-38 571 232)">Hlinitkovo nábřeží</text><text x="672" y="203" font-size="4.60" font-weight="400" fill="#3a406c" text-anchor="middle" letter-spacing=".15" transform="rotate(-22 672 203)">Benešovo nábřeží</text><text x="686" y="215" font-size="4.60" font-weight="400" fill="#3a406c" text-anchor="middle" letter-spacing=".15" transform="rotate(5 686 215)">Zarana</text><text x="604" y="253" font-size="4.83" font-weight="400" fill="#3a406c" text-anchor="middle" letter-spacing=".15" transform="rotate(-18 604 253)">Nádraží</text><text x="587.5" y="261" font-size="4.48" font-weight="400" fill="#5b63a0" text-anchor="middle" letter-spacing=".15" transform="rotate(0 587.5 261)">Zlín střed</text><text x="620" y="287" font-size="4.37" font-weight="400" fill="#3e8198" text-anchor="middle" letter-spacing=".15" transform="rotate(0 620 287)">Tomas Bata</text><text x="620" y="292" font-size="4.37" font-weight="400" fill="#3e8198" text-anchor="middle" letter-spacing=".15" transform="rotate(0 620 292)">University in Zlín</text><text x="650" y="239" font-size="4.83" font-weight="400" fill="#3a406c" text-anchor="middle" letter-spacing=".15" transform="rotate(-60 650 239)">Vodní</text><text x="716.5" y="281" font-size="4.60" font-weight="400" fill="#3a406c" text-anchor="middle" letter-spacing=".15" transform="rotate(90 716.5 281)">Šedá</text><text x="692.5" y="308.5" font-size="4.60" font-weight="400" fill="#3e8198" text-anchor="middle" letter-spacing=".15" transform="rotate(0 692.5 308.5)">Sad</text><text x="692.5" y="314.5" font-size="4.60" font-weight="400" fill="#3e8198" text-anchor="middle" letter-spacing=".15" transform="rotate(0 692.5 314.5)">Komenského</text><text x="738" y="302.5" font-size="4.83" font-weight="400" fill="#3a406c" text-anchor="middle" letter-spacing=".15" transform="rotate(0 738 302.5)">Sadová</text><text x="590.5" y="314" font-size="4.60" font-weight="400" fill="#3a406c" text-anchor="middle" letter-spacing=".15" transform="rotate(80 590.5 314)">Dlouhá</text><text x="618" y="319" font-size="4.83" font-weight="400" fill="#3a406c" text-anchor="middle" letter-spacing=".15" transform="rotate(-25 618 319)">J. A. Bati</text><text x="588" y="379.5" font-size="4.60" font-weight="400" fill="#3e8198" text-anchor="middle" letter-spacing=".15" transform="rotate(0 588 379.5)">Univerzitní park</text><text x="753" y="364" font-size="4.83" font-weight="400" fill="#3a406c" text-anchor="middle" letter-spacing=".15" transform="rotate(0 753 364)">Hradská</text><text x="800" y="314" font-size="4.83" font-weight="400" fill="#3a406c" text-anchor="middle" letter-spacing=".15" transform="rotate(-8 800 314)">Štefánikova</text><text x="750.6" y="390.8" font-size="4.60" font-weight="400" fill="#3e8198" text-anchor="middle" letter-spacing=".15" transform="rotate(0 750.6 390.8)">Stadion mládeže</text><text x="693.6" y="421.7" font-size="4.60" font-weight="400" fill="#3a406c" text-anchor="middle" letter-spacing=".15" transform="rotate(70 693.6 421.7)">nám. T. G. Masaryka</text><text x="796" y="390" font-size="4.37" font-weight="400" fill="#3a406c" text-anchor="middle" letter-spacing=".15" transform="rotate(-70 796 390)">Bůmy</text><text x="805" y="411" font-size="4.37" font-weight="400" fill="#3a406c" text-anchor="middle" letter-spacing=".15" transform="rotate(-30 805 411)">Hrnčířská</text><text x="588" y="440" font-size="4.60" font-weight="400" fill="#3a406c" text-anchor="middle" letter-spacing=".15" transform="rotate(78 588 440)">U Zimního stadionu</text><text x="572" y="461" font-size="4.60" font-weight="400" fill="#3a406c" text-anchor="middle" letter-spacing=".15" transform="rotate(70 572 461)">Vysoká</text><text x="467.7" y="511" font-size="4.60" font-weight="400" fill="#3a406c" text-anchor="middle" letter-spacing=".15" transform="rotate(0 467.7 511)">Pod Rozhlednou</text><text x="400" y="492.5" font-size="4.60" font-weight="400" fill="#3a406c" text-anchor="middle" letter-spacing=".15" transform="rotate(0 400 492.5)">edků</text><circle cx="634.3" cy="174.8" r="14.1" fill="#a9d4f8" opacity=".7"/><circle cx="634.3" cy="174.8" r="7.6" fill="#e3f1fd" opacity=".6"/><circle cx="634.3" cy="174.8" r="6.8" fill="#2597f2"/><circle cx="555.7" cy="140.5" r="7" fill="#fd5511"/><circle cx="570.3" cy="132.8" r="7" fill="#fd5511"/><circle cx="586.4" cy="274" r="7" fill="#fd5511"/><circle cx="592.9" cy="288.6" r="7" fill="#fd5511"/><circle cx="780.5" cy="308.8" r="7" fill="#fd5511"/><circle cx="696" cy="353.7" r="7" fill="#fd5511"/><circle cx="724.4" cy="347" r="7" fill="#fd5511"/><circle cx="743" cy="353.7" r="7" fill="#fd5511"/><circle cx="473.1" cy="391.7" r="7" fill="#fd5511"/><circle cx="428.4" cy="414.8" r="7" fill="#fd5511"/><circle cx="488.4" cy="410.9" r="7" fill="#fd5511"/><circle cx="566.6" cy="397.7" r="7" fill="#fd5511"/><circle cx="678.3" cy="418.2" r="7" fill="#fd5511"/><circle cx="655.8" cy="440.4" r="7" fill="#fd5511"/><circle cx="728.6" cy="426.3" r="7" fill="#fd5511"/><circle cx="759.9" cy="430.2" r="7" fill="#fd5511"/><defs><linearGradient id="msh" x1="0" y1="0" x2="1" y2="0"><stop offset="0" stop-color="#000" stop-opacity=".09"/><stop offset=".15" stop-color="#000" stop-opacity=".05"/><stop offset="1" stop-color="#000" stop-opacity="0"/></linearGradient></defs><rect x="393" y="76" width="9" height="449" fill="url(#msh)"/>
 </svg>
 <div class="zb" style="left:636px;top:399px"><svg width="28" height="28" viewBox="1 1 28 28"><path d="M15 9.5V20.5M9.5 15H20.5" stroke="#e8eaee" stroke-width="1.5" stroke-linecap="round"/></svg></div>
 <div class="zb" style="left:672px;top:399px"><svg width="28" height="28" viewBox="1 1 28 28"><path d="M9.5 15H20.5" stroke="#e8eaee" stroke-width="1.5" stroke-linecap="round"/></svg></div>
</div>
</body></html>
